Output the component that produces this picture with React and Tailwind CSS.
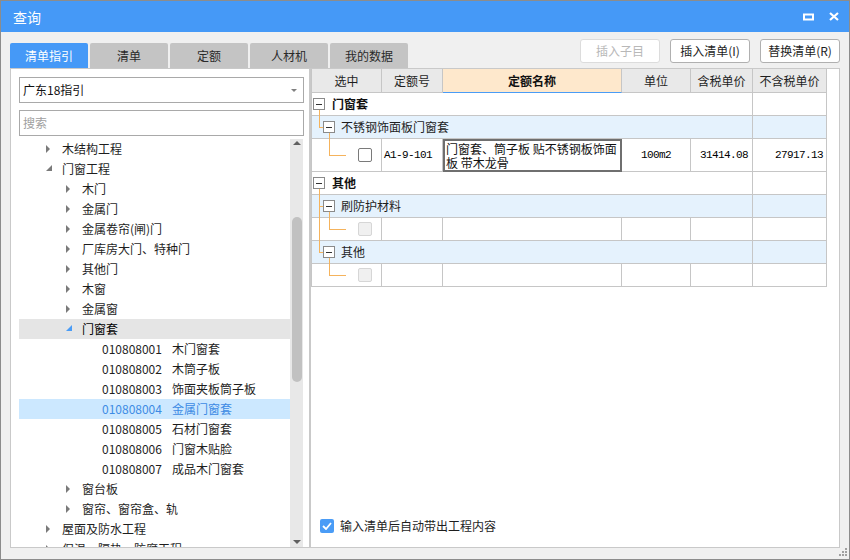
import React from 'react';

const treeRows = [
  { lv: 1, t: '木结构工程', s: 'closed' },
  { lv: 1, t: '门窗工程', s: 'open' },
  { lv: 2, t: '木门', s: 'closed' },
  { lv: 2, t: '金属门', s: 'closed' },
  { lv: 2, t: '金属卷帘(闸)门', s: 'closed' },
  { lv: 2, t: '厂库房大门、特种门', s: 'closed' },
  { lv: 2, t: '其他门', s: 'closed' },
  { lv: 2, t: '木窗', s: 'closed' },
  { lv: 2, t: '金属窗', s: 'closed' },
  { lv: 2, t: '门窗套', s: 'open', sel: 'gray' },
  { lv: 3, code: '010808001', t: '木门窗套' },
  { lv: 3, code: '010808002', t: '木筒子板' },
  { lv: 3, code: '010808003', t: '饰面夹板筒子板' },
  { lv: 3, code: '010808004', t: '金属门窗套', sel: 'blue' },
  { lv: 3, code: '010808005', t: '石材门窗套' },
  { lv: 3, code: '010808006', t: '门窗木贴脸' },
  { lv: 3, code: '010808007', t: '成品木门窗套' },
  { lv: 2, t: '窗台板', s: 'closed' },
  { lv: 2, t: '窗帘、窗帘盒、轨', s: 'closed' },
  { lv: 1, t: '屋面及防水工程', s: 'closed' },
  { lv: 1, t: '保温、隔热、防腐工程', s: 'closed' },
];

const tabs = ['清单指引', '清单', '定额', '人材机', '我的数据'];

const MinusBox = () => (
  <span className="w-[12px] h-[12px] border border-[#8a8a8a] bg-white flex items-center justify-center shrink-0">
    <span className="w-[6px] h-[1px] bg-[#333]" />
  </span>
);

const Arrow = ({ state, blue }) => {
  if (state === 'open') {
    return (
      <svg width="6" height="6" className="ml-[1px] -mt-[3px]">
        <polygon points="6,0 6,6 0,6" fill={blue ? '#4a9cf6' : '#7a7a7a'} />
      </svg>
    );
  }
  return <span className="ml-[1px] w-0 h-0 border-y-[4px] border-y-transparent border-l-[4px] border-l-[#7a7a7a]" />;
};

const TreeRow = ({ row }) => {
  const pad = row.lv === 1 ? 'pl-[26px]' : row.lv === 2 ? 'pl-[46px]' : 'pl-[83px]';
  const bg = row.sel === 'gray' ? 'bg-[#e5e5e5]' : row.sel === 'blue' ? 'bg-[#cce8ff] text-[#3d8be4]' : 'text-[#1e1e1e]';
  return (
    <div className={`h-[20px] shrink-0 flex items-center whitespace-nowrap ${pad} ${bg}`}>
      {row.lv < 3 && (
        <span className="w-[17px] flex items-center">
          <Arrow state={row.s} blue={row.sel === 'gray'} />
        </span>
      )}
      {row.code && <span>{row.code}</span>}
      <span className={row.code ? 'ml-[10px]' : ''}>{row.t}</span>
    </div>
  );
};

const GroupRow = ({ level, label }) => {
  const bg = level === 1 ? 'bg-white' : 'bg-[#e5f2fd]';
  return (
    <div className={`h-[23px] flex border-b border-[#c6c6c6] ${bg}`}>
      <div className={`w-[441px] border-r border-[#c6c6c6] flex items-center ${level === 1 ? 'pl-[1px]' : 'pl-[11px]'}`}>
        <MinusBox />
        <span className={level === 1 ? 'ml-[7px] font-bold text-[#111]' : 'ml-[6px] text-[#1e1e1e]'}>{label}</span>
      </div>
      <div className="w-[74px] border-r border-[#c6c6c6]" />
    </div>
  );
};

const EmptyRow = () => (
  <div className="h-[23px] flex border-b border-[#c6c6c6]">
    <div className="w-[70px] border-r border-[#c6c6c6] flex items-center pl-[46px]">
      <span className="w-[14px] h-[14px] rounded-[2px] border border-[#d6d6d6] bg-[#f0f0f0]" />
    </div>
    <div className="w-[61px] border-r border-[#c6c6c6]" />
    <div className="w-[179px] border-r border-[#c6c6c6]" />
    <div className="w-[69px] border-r border-[#c6c6c6]" />
    <div className="w-[62px] border-r border-[#c6c6c6]" />
    <div className="w-[74px] border-r border-[#c6c6c6]" />
  </div>
);

const mono = "font-['Liberation_Mono',monospace] text-[11px] tracking-[-0.6px] text-black";

const DataRow = () => (
  <div className="h-[33px] flex border-b border-[#c6c6c6]">
    <div className="w-[70px] border-r border-[#c6c6c6] flex items-center pl-[46px]">
      <span className="w-[14px] h-[14px] rounded-[2px] border border-[#7a7a7a] bg-white" />
    </div>
    <div className={`w-[61px] border-r border-[#c6c6c6] flex items-center pl-[2px] ${mono}`}>A1-9-101</div>
    <div className="w-[179px] border-2 border-[#6f6f6f] -mb-[1px] pl-[1px] pt-[1px] leading-[14px] text-[#111] whitespace-nowrap">
      <div>门窗套、筒子板 贴不锈钢板饰面</div>
      <div>板 带木龙骨</div>
    </div>
    <div className={`w-[69px] border-r border-[#c6c6c6] flex items-center justify-center ${mono}`}>100m2</div>
    <div className={`w-[62px] border-r border-[#c6c6c6] flex items-center justify-end pr-[4px] ${mono}`}>31414.08</div>
    <div className={`w-[74px] border-r border-[#c6c6c6] flex items-center justify-end pr-[3px] ${mono}`}>27917.13</div>
  </div>
);

const Connectors = () => (
  <svg className="absolute left-0 top-0 pointer-events-none" width="40" height="200" fill="none" stroke="#f5b35c" strokeWidth="1" shapeRendering="crispEdges">
    <path d="M7.5 17 V34.5 H11" />
    <path d="M17.5 40 V62.5 H34" />
    <path d="M7.5 96 V159.5 H11 M7.5 113.5 H11" />
    <path d="M17.5 119 V136.5 H34" />
    <path d="M17.5 165 V182.5 H34" />
  </svg>
);

export default function App() {
  return (
    <div className="relative w-[850px] h-[560px] bg-[#f0f0f0] border border-[#8c8c8c] flex flex-col font-['Noto_Sans_CJK_SC','Microsoft_YaHei',sans-serif] text-[12px] overflow-hidden">
      {/* title bar */}
      <div className="h-[31px] shrink-0 bg-[#4599f7] flex items-center pl-[12px] pr-[10px] text-white">
        <span className="text-[14px] leading-none">查询</span>
        <div className="ml-auto flex items-center gap-[15px]">
          <svg width="11" height="8">
            <rect x="1" y="1.5" width="9" height="5" stroke="white" strokeWidth="2" fill="none" />
          </svg>
          <svg width="10" height="9">
            <path d="M1 1 L9 8 M9 1 L1 8" stroke="white" strokeWidth="2.2" />
          </svg>
        </div>
      </div>

      {/* tabs + buttons */}
      <div className="mt-[7px] h-[29px] shrink-0 flex justify-between pl-[9px] pr-[9px]">
        <div className="flex items-end gap-[2px]">
          {tabs.map((t, i) => (
            <div
              key={t}
              className={`w-[78px] h-[25px] rounded-t-[2px] flex items-center justify-center ${i === 0 ? 'bg-[#4599f7] text-white' : 'bg-[#c4c4c4] text-[#2a2a2a]'}`}
            >
              {t}
            </div>
          ))}
        </div>
        <div className="flex items-start gap-[10px]">
          <button className="w-[80px] h-[24px] rounded-[3px] border border-[#dcdcdc] bg-white text-[#b8b8b8]">插入子目</button>
          <button className="w-[80px] h-[24px] rounded-[3px] border border-[#b0b0b0] bg-white text-[#1e1e1e]">插入清单(I)</button>
          <button className="w-[80px] h-[24px] rounded-[3px] border border-[#b0b0b0] bg-white text-[#1e1e1e]">替换清单(R)</button>
        </div>
      </div>

      {/* panels */}
      <div className="h-[480px] shrink-0 flex pl-[9px]">
        {/* left */}
        <div className="w-[300px] bg-white border border-[#c9c9c9] flex flex-col">
          <div className="ml-[8px] mt-[8px] w-[285px] h-[26px] border border-[#a9a9a9] flex items-center pl-[3px] pr-[6px] text-[#111]">
            <span>广东18指引</span>
            <span className="ml-auto w-0 h-0 border-x-[3px] border-x-transparent border-t-[3px] border-t-[#808080]" />
          </div>
          <div className="ml-[8px] mt-[7px] w-[285px] h-[26px] border border-[#a9a9a9] flex items-center pl-[3px] text-[#a0a0a0]">
            搜索
          </div>
          <div className="mt-[3px] ml-[8px] flex-1 flex min-h-0">
            <div className="w-[271px] flex flex-col overflow-hidden">
              {treeRows.map((r, i) => (
                <TreeRow key={i} row={r} />
              ))}
            </div>
            <div className="w-[13px] bg-[#e8e8e8] flex flex-col items-center">
              <span className="mt-[2px] w-0 h-0 border-x-[4px] border-x-transparent border-b-[4px] border-b-[#606060]" />
              <span className="mt-[72px] w-[10px] h-[165px] rounded-full bg-[#c1c1c1]" />
              <span className="mt-auto mb-[3px] w-0 h-0 border-x-[4px] border-x-transparent border-t-[4px] border-t-[#606060]" />
            </div>
          </div>
        </div>

        {/* right */}
        <div className="w-[530px] bg-white border-y border-r border-l border-[#c9c9c9] flex flex-col">
          <div className="w-[516px] border-l border-[#c6c6c6]">
            <div className="h-[24px] flex bg-[#e9e9e9] text-[#1e1e1e]">
              <div className="w-[70px] border-r border-b border-[#c6c6c6] flex items-center justify-center">选中</div>
              <div className="w-[61px] border-r border-b border-[#c6c6c6] flex items-center justify-center">定额号</div>
              <div className="w-[179px] bg-[#fee8cc] border-r border-r-[#c6c6c6] border-b border-b-[#4a9cf6] flex items-center justify-center font-bold text-[#111]">定额名称</div>
              <div className="w-[69px] border-r border-b border-[#c6c6c6] flex items-center justify-center">单位</div>
              <div className="w-[62px] border-r border-b border-[#c6c6c6] flex items-center justify-center">含税单价</div>
              <div className="w-[74px] border-r border-b border-[#c6c6c6] flex items-center justify-center">不含税单价</div>
            </div>
            <div className="relative">
              <GroupRow level={1} label="门窗套" />
              <GroupRow level={2} label="不锈钢饰面板门窗套" />
              <DataRow />
              <GroupRow level={1} label="其他" />
              <GroupRow level={2} label="刷防护材料" />
              <EmptyRow />
              <GroupRow level={2} label="其他" />
              <EmptyRow />
              <Connectors />
            </div>
          </div>
          <div className="mt-auto mb-[12px] pl-[9px] flex items-center">
            <span className="w-[14px] h-[14px] rounded-[2px] bg-[#4a9cf6] flex items-center justify-center">
              <svg width="10" height="8" fill="none">
                <path d="M1 4 L4 7 L9 1" stroke="white" strokeWidth="1.8" />
              </svg>
            </span>
            <span className="ml-[6px] text-[#1e1e1e]">输入清单后自动带出工程内容</span>
          </div>
        </div>
      </div>

      {/* resize grip */}
      <svg className="absolute right-[1px] bottom-[2px]" width="9" height="9" fill="#a0a0a0">
        <rect x="6" y="0" width="2" height="2" />
        <rect x="3" y="3" width="2" height="2" />
        <rect x="6" y="3" width="2" height="2" />
        <rect x="0" y="6" width="2" height="2" />
        <rect x="3" y="6" width="2" height="2" />
        <rect x="6" y="6" width="2" height="2" />
      </svg>
    </div>
  );
}
